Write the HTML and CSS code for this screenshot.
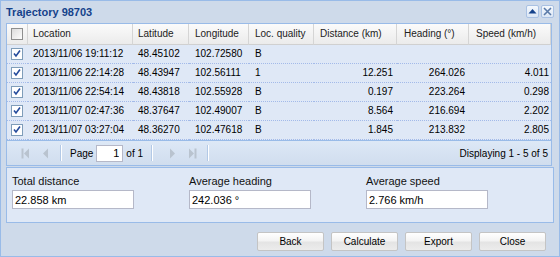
FILE: index.html
```html
<!DOCTYPE html>
<html lang="en">
<head>
    <meta charset="UTF-8">
    <title>Trajectory 98703</title>
    <link rel="stylesheet" href="styles.css">
</head>
<body>
    <div class="window">
        <div class="titlebar">
            <span class="title">Trajectory 98703</span>
            <div class="tools">
                <span class="tool">
                    <svg width="11" height="11" viewBox="0 0 11 11"><path d="M1.5 7.5 L5.5 3 L9.5 7.5 Z" fill="#15428b"/></svg>
                </span>
                <span class="tool">
                    <svg width="11" height="11" viewBox="0 0 11 11"><path d="M2 2 L9 9 M9 2 L2 9" stroke="#5a7aa8" stroke-width="1.6"/></svg>
                </span>
            </div>
        </div>

        <div class="grid">
            <table>
                <colgroup>
                    <col style="width:21px">
                    <col style="width:105px">
                    <col style="width:56px">
                    <col style="width:60px">
                    <col style="width:65px">
                    <col style="width:83px">
                    <col style="width:72px">
                    <col style="width:82px">
                </colgroup>
                <thead>
                    <tr>
                        <th class="check-col"><span class="cb"></span></th>
                        <th>Location</th>
                        <th>Latitude</th>
                        <th class="pad6">Longitude</th>
                        <th class="pad6">Loc. quality</th>
                        <th class="pad6">Distance (km)</th>
                        <th class="pad7">Heading (°)</th>
                        <th class="pad7">Speed (km/h)</th>
                    </tr>
                </thead>
                <tbody>
                    <tr>
                        <td class="check-col"><span class="cb checked"></span></td>
                        <td>2013/11/06 19:11:12</td>
                        <td>48.45102</td>
                        <td class="pad6">102.72580</td>
                        <td class="pad6">B</td>
                        <td class="num"></td>
                        <td class="num"></td>
                        <td class="num last"></td>
                    </tr>
                    <tr>
                        <td class="check-col"><span class="cb checked"></span></td>
                        <td>2013/11/06 22:14:28</td>
                        <td>48.43947</td>
                        <td class="pad6">102.56111</td>
                        <td class="pad6">1</td>
                        <td class="num">12.251</td>
                        <td class="num">264.026</td>
                        <td class="num last">4.011</td>
                    </tr>
                    <tr>
                        <td class="check-col"><span class="cb checked"></span></td>
                        <td>2013/11/06 22:54:14</td>
                        <td>48.43818</td>
                        <td class="pad6">102.55928</td>
                        <td class="pad6">B</td>
                        <td class="num">0.197</td>
                        <td class="num">223.264</td>
                        <td class="num last">0.298</td>
                    </tr>
                    <tr>
                        <td class="check-col"><span class="cb checked"></span></td>
                        <td>2013/11/07 02:47:36</td>
                        <td>48.37647</td>
                        <td class="pad6">102.49007</td>
                        <td class="pad6">B</td>
                        <td class="num">8.564</td>
                        <td class="num">216.694</td>
                        <td class="num last">2.202</td>
                    </tr>
                    <tr>
                        <td class="check-col"><span class="cb checked"></span></td>
                        <td>2013/11/07 03:27:04</td>
                        <td>48.36270</td>
                        <td class="pad6">102.47618</td>
                        <td class="pad6">B</td>
                        <td class="num">1.845</td>
                        <td class="num">213.832</td>
                        <td class="num last">2.805</td>
                    </tr>
                </tbody>
            </table>

            <div class="pager">
                <span class="pg-btn">
                    <svg width="9" height="11" viewBox="0 0 9 11"><rect x="0.5" y="0.5" width="2" height="10" fill="#b9c3cf"/><path d="M8 0.5 L3 5.5 L8 10.5 Z" fill="#b9c3cf"/></svg>
                </span>
                <span class="pg-btn">
                    <svg width="7" height="11" viewBox="0 0 7 11"><path d="M6 0.5 L1 5.5 L6 10.5 Z" fill="#b9c3cf"/></svg>
                </span>
                <span class="sep"></span>
                <span class="pg-text">Page</span>
                <input class="pg-input" type="text" value="1">
                <span class="pg-text">of 1</span>
                <span class="sep"></span>
                <span class="pg-btn next">
                    <svg width="7" height="11" viewBox="0 0 7 11"><path d="M1 0.5 L6 5.5 L1 10.5 Z" fill="#b9c3cf"/></svg>
                </span>
                <span class="pg-btn">
                    <svg width="9" height="11" viewBox="0 0 9 11"><path d="M1 0.5 L6 5.5 L1 10.5 Z" fill="#b9c3cf"/><rect x="6.5" y="0.5" width="2" height="10" fill="#b9c3cf"/></svg>
                </span>
                <span class="sep"></span>
                <span class="pg-info">Displaying 1 - 5 of 5</span>
            </div>
        </div>

        <div class="summary">
            <div class="field">
                <label for="totalDistance">Total distance</label>
                <input type="text" id="totalDistance" value="22.858 km">
            </div>
            <div class="field">
                <label for="avgHeading">Average heading</label>
                <input type="text" id="avgHeading" value="242.036 °">
            </div>
            <div class="field">
                <label for="avgSpeed">Average speed</label>
                <input type="text" id="avgSpeed" value="2.766 km/h">
            </div>
        </div>

        <div class="buttons">
            <button class="btn">Back</button>
            <button class="btn">Calculate</button>
            <button class="btn">Export</button>
            <button class="btn">Close</button>
        </div>
    </div>
</body>
</html>
```

FILE: styles.css
```css
body {
    margin: 0;
    padding: 0;
    font-family: "Liberation Sans", Arial, sans-serif;
    font-size: 10px;
    color: #000;
    background: #fff;
}
.window {
    box-sizing: border-box;
    width: 560px;
    height: 257px;
    border: 1px solid #99bbe8;
    background: #cedaea;
    padding: 0 5px;
}
.titlebar {
    display: flex;
    align-items: center;
    justify-content: space-between;
    height: 22px;
}
.title {
    font-size: 11px;
    font-weight: bold;
    color: #15428b;
    margin-top: -1px;
}
.tools {
    display: flex;
    gap: 2px;
    margin-top: -2px;
    margin-right: 0;
}
.tool {
    box-sizing: border-box;
    width: 13px;
    height: 13px;
    display: flex;
    align-items: center;
    justify-content: center;
    border: 1px solid #a9c1e3;
    border-radius: 2px;
    background: linear-gradient(#f4f8fd, #dce7f5);
}
.grid {
    width: 546px;
    box-sizing: border-box;
    border: 1px solid #99bbe8;
    background: #fff;
}
table {
    border-collapse: separate;
    border-spacing: 0;
    table-layout: fixed;
    width: 544px;
}
th {
    font-weight: normal;
    text-align: left;
    line-height: 20px;
    padding: 0 5px;
    color: #222;
    background: linear-gradient(#fbfbfb, #ebebeb);
    border-bottom: 1px solid #d0d0d0;
    border-right: 1px solid #d5d5d5;
    white-space: nowrap;
    overflow: hidden;
}
th:last-child {
    border-right: 1px solid #d5d5d5;
}
td {
    line-height: 18px;
    padding: 0 5px;
    background: #dfe8f6;
    border-bottom: 1px dotted #a3bae9;
    white-space: nowrap;
    overflow: hidden;
}
.pad6 {
    padding-left: 6px;
}
.pad7 {
    padding-left: 7px;
}
td.num {
    text-align: right;
    padding-right: 4px;
}
td.num.last {
    padding-right: 2px;
}
.check-col {
    padding: 0 0 0 4px;
    line-height: 0;
}
th.check-col {
    vertical-align: middle;
}
td.check-col {
    vertical-align: middle;
}
.cb {
    display: inline-block;
    box-sizing: border-box;
    width: 12px;
    height: 12px;
    border: 1px solid #8e8f8f;
    background: linear-gradient(135deg, #dcdcdc, #fdfdfd);
    vertical-align: middle;
}
.cb.checked {
    border-color: #7f9db9;
    background: #fff url("data:image/svg+xml;utf8,<svg xmlns='http://www.w3.org/2000/svg' width='10' height='10' viewBox='0 0 10 10'><path d='M2 4.5 L4 7 L8 1.5' stroke='%23264c9c' stroke-width='1.6' fill='none'/></svg>") center no-repeat;
}
.pager {
    display: flex;
    align-items: center;
    height: 24px;
    border-top: 1px solid #99bbe8;
    background: linear-gradient(#dde8f6, #d0ddee);
    padding: 0 3px 0 8px;
}
.pg-btn {
    display: flex;
    align-items: center;
    justify-content: center;
    width: 20px;
    height: 16px;
}
.pg-btn.next {
    margin-left: 4px;
}
.sep {
    width: 1px;
    height: 16px;
    margin: 0 5px;
    background: #b3c9e6;
    border-right: 1px solid #fff;
}
.pg-text {
    margin: 0 3px;
}
.pg-input {
    box-sizing: border-box;
    width: 27px;
    height: 17px;
    border: 1px solid #b5b8c8;
    background: #fff;
    font-family: "Liberation Sans", Arial, sans-serif;
    font-size: 11px;
    text-align: right;
    padding: 0 3px;
    margin: 0;
}
.pg-info {
    margin-left: auto;
}
.summary {
    display: flex;
    margin-top: 1px;
    width: 548px;
    box-sizing: border-box;
    height: 56px;
    border: 1px solid #99bbe8;
    background: #dfe8f6;
    padding: 7px 0 0 5px;
    gap: 55px;
}
.field {
    display: flex;
    flex-direction: column;
}
.field label {
    font-size: 11px;
    line-height: 13px;
    margin-bottom: 2px;
    color: #111;
}
.field input {
    box-sizing: border-box;
    width: 122px;
    height: 19px;
    border: 1px solid #b5b8c8;
    background: #fff;
    font-family: "Liberation Sans", Arial, sans-serif;
    font-size: 11px;
    padding: 0 2px;
    margin: 0;
    color: #000;
}
.buttons {
    display: flex;
    justify-content: flex-end;
    gap: 7px;
    padding: 9px 8px 0 0;
}
.btn {
    box-sizing: border-box;
    width: 67px;
    height: 19px;
    border: 1px solid #c4c4c4;
    border-radius: 2px;
    background: linear-gradient(#ffffff 0%, #f3f3f3 45%, #e4e4e4 55%, #ececec 100%);
    font-family: "Liberation Sans", Arial, sans-serif;
    font-size: 10px;
    color: #000;
    padding: 0;
    cursor: pointer;
}
```
